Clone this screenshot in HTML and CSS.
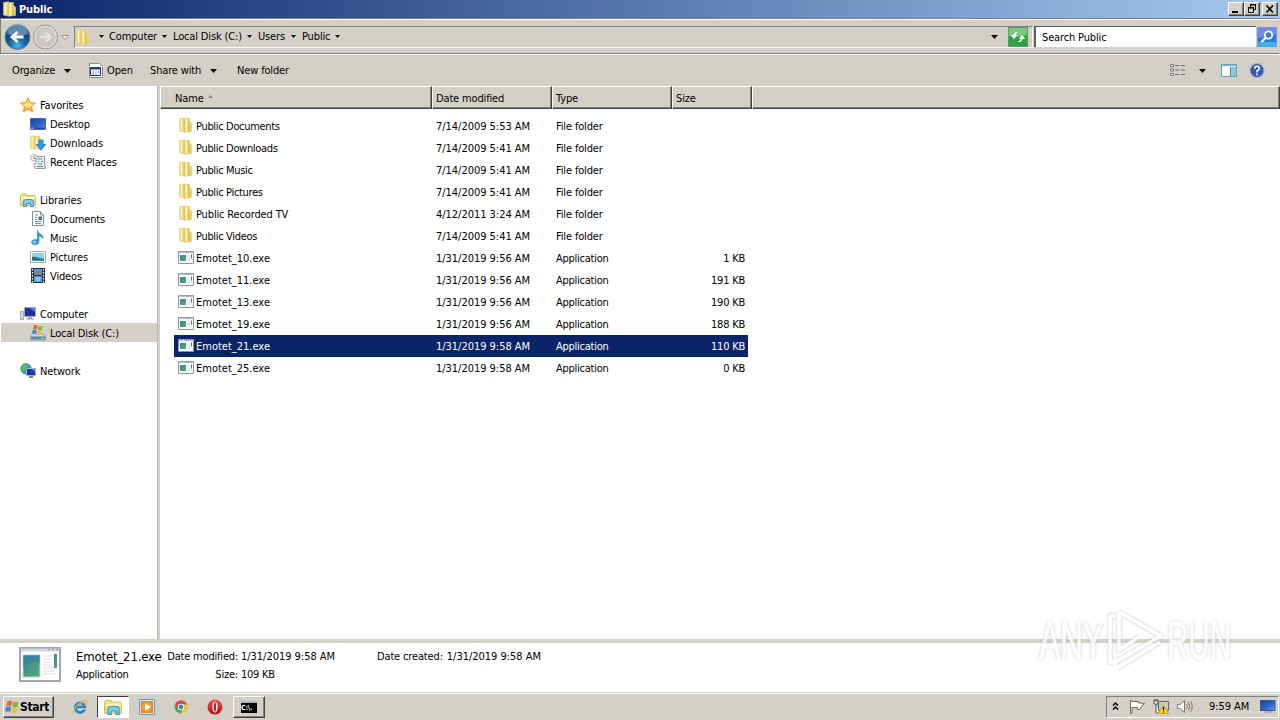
FILE: index.html
```html
<!DOCTYPE html>
<html lang="en">
<head>
<meta charset="utf-8">
<title>Public</title>
<link rel="stylesheet" href="styles.css">
</head>
<body>
<svg class="defs" width="0" height="0">
  <defs>
    <linearGradient id="gold"><stop offset="0" stop-color="#f7e895"/><stop offset=".35" stop-color="#f9eda4"/><stop offset=".6" stop-color="#e3c655"/><stop offset="1" stop-color="#f2e07e"/></linearGradient>
    <linearGradient id="screen" x2="1" y2="1"><stop offset="0" stop-color="#1a3f94"/><stop offset=".6" stop-color="#2f68c8"/><stop offset="1" stop-color="#69a4e8"/></linearGradient>
    <linearGradient id="teal" x2="1" y2="1"><stop offset="0" stop-color="#3f7f9f"/><stop offset="1" stop-color="#4fb06c"/></linearGradient>
    <radialGradient id="ball" cy=".85"><stop offset="0" stop-color="#3fc4ee"/><stop offset=".55" stop-color="#1b6bae"/><stop offset="1" stop-color="#174a80"/></radialGradient>
    <radialGradient id="grey"><stop offset="0" stop-color="#d2d0cc"/><stop offset=".75" stop-color="#c6c5c2"/><stop offset="1" stop-color="#ededed"/></radialGradient>
    <linearGradient id="red" x2="0" y2="1"><stop offset="0" stop-color="#e8584e"/><stop offset="1" stop-color="#a80f12"/></linearGradient>
    <linearGradient id="starfill" x2="0" y2="1"><stop offset="0" stop-color="#ffc44a"/><stop offset=".5" stop-color="#ffe98a"/><stop offset="1" stop-color="#f79a34"/></linearGradient>
  </defs>
  <symbol id="folder" viewBox="0 0 16 16"><path d="M1.500 1.500 6.500 .8V15L1.500 14z" fill="#f0de85" stroke="#e3cf7c" stroke-width=".6"/><path d="M6 1.500H11.500V4.500L13.500 6V14.500L6 15.300z" fill="url(#gold)" stroke="#ddc563" stroke-width=".6"/><path d="M3.500 2V13M8.500 3V9" stroke="#fff9d6"/><path d="M6.300 2V15" stroke="#d8b94a" stroke-width=".8"/><path d="M11.500 9V14.500" stroke="#d5b34a" stroke-width=".8"/></symbol>
  <symbol id="exe" viewBox="0 0 16 16"><path d="M.5 2.500H15.500V14.500H.5z" fill="#fff" stroke="#8f979f"/><path d="M1 3.500H15" stroke="#c3c9d0" stroke-width="1.500"/><path d="M8 3H14" stroke="#778" stroke-dasharray="1 1"/><path d="M2 6H8V12H2z" fill="url(#teal)"/><path d="M9 7H12M9 9H12M9 11H12" stroke="#d0d4d8"/><path d="M13 5.500H14V9.500H13z" fill="#3d8075"/></symbol>
  <symbol id="star" viewBox="0 0 16 16"><path d="M8 .8 10.200 5.600 15.300 6.200 11.500 9.700 12.600 14.800 8 12.200 3.400 14.800 4.500 9.700 .7 6.200 5.800 5.600z" fill="url(#starfill)" stroke="#ec8a2a"/></symbol>
  <symbol id="desktop" viewBox="0 0 16 16"><path d="M.5 2.500H15.500V13.500H.5z" fill="url(#screen)" stroke="#4a6ab0"/><path d="M1 11.500H15V13H1z" fill="#2a4a94"/><path d="M1 12.200H4" stroke="#75d6ff"/></symbol>
  <symbol id="down" viewBox="0 0 16 16"><use href="#folder" x="-1" width="15" height="15"/><path d="M9 5H13V9.500H15.500L11 15.200 6.500 9.500H9z" fill="#3997df" stroke="#2f78c0"/></symbol>
  <symbol id="recent" viewBox="0 0 16 16"><path d="M5 2.500H14.500V12H15.500V14.500H5.500L4 13V10H6V4" fill="#e6eef4" stroke="#879cac"/><circle cx="3.800" cy="3.800" r="3.200" fill="#f8fbfd" stroke="#9cb0be"/><path d="M4 2V4.500H6M8 5H12M8 7.500H9M11 7.500H13M8 10H12M7 12.500H13" stroke="#688397" fill="none"/></symbol>
  <symbol id="library" viewBox="0 0 16 16"><path d="M.5 3.500 2 2H6L7 3.500H14.500L15.500 6V13.500H.5z" fill="#f5df80" stroke="#d5bb60"/><path d="M1 6H15" stroke="#fff6bb" stroke-width="2"/><path d="M3.500 14.500V9L5 7.500H11.500L13.500 9V14.500H10.500V11.500H6.500V14.500z" fill="#79caed" stroke="#4296bf"/></symbol>
  <symbol id="document" viewBox="0 0 16 16"><path d="M2.500 .5H10.500L13.500 3.500V14.500H2.500z" fill="#fff" stroke="#7e91a4"/><path d="M10.500 .5V4H13.500" fill="#dae6ef" stroke="#7e91a4"/><path d="M5 4H8M5 6.500H7M5 8.500H7M5 10.500H11.500M5 12.500H11" stroke="#6c91b3"/><path d="M8.500 5.500H12V9H8.500z" fill="#4f6aa1"/></symbol>
  <symbol id="music" viewBox="0 0 16 16"><path d="M7.500 0C8 4 14 4 13 9 12 6.500 10 6 9 6V12C8.500 15.500 2 15.500 1.500 12.500 1.500 9.500 5.500 9 7.500 10z" fill="#2f92d5" stroke="#2b7dbb" stroke-width=".5"/><ellipse cx="4.500" cy="12" rx="2" ry="1.500" fill="#78c8f3"/></symbol>
  <symbol id="picture" viewBox="0 0 16 16"><path d="M.5 2.500H15.500V13.500H.5z" fill="#fff" stroke="#9baeb9"/><path d="M2 4H14V12H2z" fill="#8ed3f2"/><path d="M2 8C6 7 8 9.500 14 9.500V12H2z" fill="#287588"/><path d="M2 11H14V12H2z" fill="#35a18b"/></symbol>
  <symbol id="video" viewBox="0 0 16 16"><path d="M1 0H15V15H1z" fill="#25323e"/><path d="M4 1H12V7H4zM4 8H12V14H4z" fill="#4f9cd3"/><path d="M4 5 7 2 10 5 12 3V7H4z" fill="#8b7f8c"/><circle cx="8" cy="11" r="2.500" fill="#8bc8e9"/><path d="M2.500 1V15M13.500 1V15" stroke="#fff" stroke-width="1.200" stroke-dasharray="1.500 1.500"/></symbol>
  <symbol id="computer" viewBox="0 0 16 16"><path d="M.5 5.500H3.500V13.500H.5z" fill="#d7dce1" stroke="#9fa7ad"/><path d="M4.500 1.500H15.500V10.500H4.500z" fill="#1c2fa5" stroke="#a6abb2"/><path d="M9 2H15V6z" fill="#5873dd"/><path d="M8 11H12V12.500H14V13.500H6V12.500H8z" fill="#9da4aa"/></symbol>
  <symbol id="flag4" viewBox="0 0 16 16"><path d="M2.500 2Q5 .5 7.700 2L6.700 7Q4 6 1.300 7z" fill="#ed6532"/><path d="M8.700 2.500Q11 4 14.500 2.500L13 8Q10.500 9 7.700 7.500z" fill="#77b82c"/><path d="M1 8Q3.500 7 6.500 8L5.500 13Q3 12 0 13z" fill="#3989d5"/><path d="M7.500 8.700Q10 10 12.800 9L11.500 14Q9 15 6.500 13.700z" fill="#f6bf26"/></symbol>
  <symbol id="disk" viewBox="0 0 16 16"><path d="M2 9H13L15.500 11V15H.5V11z" fill="#cdd8de" stroke="#8596a0" stroke-width=".7"/><path d="M1 11.500H15V14.500H1z" fill="#5c8aa0"/><path d="M11 13.500H14" stroke="#70e09b"/><use href="#flag4" x="2" y="-1" width="12" height="12"/></symbol>
  <symbol id="network" viewBox="0 0 16 16"><circle cx="6" cy="5.800" r="5.300" fill="#269bd2" stroke="#4c8cae" stroke-width=".7"/><path d="M2 3 6 1 8 4 5 6 4 9 1 6z" fill="#66bd45"/><path d="M6.500 5.500H15.500V12.500H6.500z" fill="#1936b3" stroke="#a8b3c1"/><path d="M9 13H13V15H9z" fill="#6c859c"/><path d="M11 6H15V9z" fill="#5575dc"/></symbol>
  <symbol id="tri" viewBox="0 0 7 4"><path d="M0 0H7L3.500 4z" fill="#000"/></symbol>
  <symbol id="monitor" viewBox="0 0 16 16"><path d="M.5 1.500H15V11.500H.5z" fill="url(#screen)" stroke="#2b56a8"/><path d="M4 13H12" stroke="#8093b5"/></symbol>
</svg>

<div class="window">
  <header class="titlebar">
    <svg class="i16"><use href="#folder"/></svg><span class="title">Public</span>
    <div class="caption">
      <button class="cap"><svg viewBox="0 0 14 12"><path d="M3 9H9" stroke="#000" stroke-width="2"/></svg></button>
      <button class="cap"><svg viewBox="0 0 14 12"><path d="M5.500 4V1.500H10.500V6.500H9M5 2H11M3.500 4.500H8.500V9.500H3.500zM3 5H9" fill="none" stroke="#000"/></svg></button>
      <button class="cap close"><svg viewBox="0 0 14 12"><path d="M3.500 2.500 10 9.500M10 2.500 3.500 9.500" stroke="#000" stroke-width="1.700"/></svg></button>
    </div>
  </header>

  <div class="navbar">
    <svg class="travel" viewBox="0 0 70 28">
      <circle cx="17.500" cy="14" r="12.500" fill="url(#ball)" stroke="#66809b"/><path d="M7 11A10.500 10.500 0 0 1 28 11Q17 15 7 11z" fill="#9cc5df" opacity=".5"/>
      <path d="M23.500 14H13M17.500 9 12 14 17.500 19" fill="none" stroke="#fff" stroke-width="2.800"/>
      <circle cx="45.500" cy="14" r="12" fill="url(#grey)" stroke="#92918e"/><path d="M40 14H50M46 9.500 51 14 46 18.500" fill="none" stroke="#e5e4e2" stroke-width="2"/>
      <path d="M61.500 12.500H68.500L65 16.500z" fill="#f2f1ee" stroke="#999690"/>
    </svg>
    <div class="address">
      <svg class="i16"><use href="#folder"/></svg>
      <svg class="tri c0"><use href="#tri"/></svg><span class="w47">Computer</span>
      <svg class="tri"><use href="#tri"/></svg><span class="w69">Local Disk (C:)</span>
      <svg class="tri"><use href="#tri"/></svg><span class="w28">Users</span>
      <svg class="tri"><use href="#tri"/></svg><span class="w28">Public</span>
      <svg class="tri"><use href="#tri"/></svg>
      <svg class="tri drop"><use href="#tri"/></svg>
    </div>
    <svg class="refresh" viewBox="0 0 20 20"><path d="M.5 .5H19.500V19.500H.5z" fill="#2da43c" stroke="#65947a"/><path d="M1 1H19V8Q10 11 1 9z" fill="#74c97a"/><path d="M9.500 5.500Q6 5 6 9M3.500 8.500H8.500L6 11.500zM10.500 14.500Q14 15 14 11M11.500 11.500H16.500L14 8.500z" fill="#fff" stroke="#fff"/></svg>
    <div class="search">Search Public</div>
    <svg class="go" viewBox="0 0 20 20"><path d="M.5 .5H19.500V19.500H.5z" fill="#2c7bdc" stroke="#7895c9"/><path d="M1 1H19V8L1 11z" fill="#6c8ee2"/><path d="M1 15H19V19H1z" fill="#37b9ef"/><circle cx="11.500" cy="8" r="3.700" fill="#347bd5" stroke="#fff" stroke-width="1.800"/><path d="M8.500 11 4.500 15" stroke="#fff" stroke-width="2.300"/></svg>
  </div>

  <div class="commands">
    <span class="organize">Organize</span><svg class="tri"><use href="#tri"/></svg>
    <svg class="i16 openicon" viewBox="0 0 16 16"><path d="M1.500 .5H11.500L14.500 3.500V14.500H1.500z" fill="#fff" stroke="#8b8f98"/><path d="M2.500 4.500H12.500V12.500H2.500z" fill="#fff" stroke="#172b63"/><path d="M3 5.500H12" stroke="#2c49a0" stroke-width="2"/><path d="M4.500 9H6M7.500 9H8.500M10 9H11.500M4.500 11H6M7.500 11H8.500" stroke="#315496"/></svg>
    <span class="open">Open</span><span class="share">Share with</span><svg class="tri"><use href="#tri"/></svg><span class="newfolder">New folder</span>
    <div class="viewtools">
      <svg class="views" viewBox="0 0 16 14"><path d="M.5 .5H3.500V2.500H.5zM.5 5H3.500V7H.5zM.5 9.500H3.500V11.500H.5z" fill="#fff" stroke="#777"/><path d="M5 1.500H9M10.500 1.500H15M5 6H9M10.500 6H15M5 10.500H9M10.500 10.500H15" stroke="#696f7b"/></svg>
      <svg class="tri"><use href="#tri"/></svg>
      <svg class="i16 pane" viewBox="0 0 16 16"><path d="M.5 1.500H15.500V13.500H.5z" fill="#fff" stroke="#5e9eb7"/><path d="M1 2.500H15" stroke="#87b8cc" stroke-width="1.500"/><path d="M10 4H15V13H10z" fill="#8fc6dc"/><path d="M9.500 4V13" stroke="#518ba4"/></svg>
      <svg class="i16 help" viewBox="0 0 16 16"><circle cx="8" cy="7.500" r="7" fill="#3159b5" stroke="#a0abc6" stroke-width="1.200"/><path d="M5.700 5.700Q5.700 3.300 8 3.300T10.300 5.500Q10.300 6.700 8 8V9.500M8 10.500V12.200" stroke="#fff" stroke-width="1.600" fill="none"/></svg>
    </div>
  </div>

  <main class="content">
    <nav class="tree">
      <div class="node root"><svg class="i16"><use href="#star"/></svg><span>Favorites</span></div>
      <div class="node"><svg class="i16"><use href="#desktop"/></svg><span>Desktop</span></div>
      <div class="node"><svg class="i16"><use href="#down"/></svg><span>Downloads</span></div>
      <div class="node"><svg class="i16"><use href="#recent"/></svg><span>Recent Places</span></div>
      <div class="node root gap"><svg class="i16"><use href="#library"/></svg><span>Libraries</span></div>
      <div class="node"><svg class="i16"><use href="#document"/></svg><span>Documents</span></div>
      <div class="node"><svg class="i16"><use href="#music"/></svg><span>Music</span></div>
      <div class="node"><svg class="i16"><use href="#picture"/></svg><span>Pictures</span></div>
      <div class="node"><svg class="i16"><use href="#video"/></svg><span>Videos</span></div>
      <div class="node root gap"><svg class="i16"><use href="#computer"/></svg><span>Computer</span></div>
      <div class="node current"><svg class="i16"><use href="#disk"/></svg><span>Local Disk (C:)</span></div>
      <div class="node root gap"><svg class="i16"><use href="#network"/></svg><span>Network</span></div>
    </nav>
    <section class="files">
      <div class="head"><div class="hname">Name<svg class="sort" viewBox="0 0 5 3"><path d="M0 3H5L2.500 0z" fill="#8b8882"/></svg></div><div>Date modified</div><div>Type</div><div>Size</div><div></div></div>
      <div class="rows">
        <div class="row"><svg class="i16"><use href="#folder"/></svg><span class="fname">Public Documents</span><span class="date">7/14/2009 5:53 AM</span><span>File folder</span><span></span></div>
        <div class="row"><svg class="i16"><use href="#folder"/></svg><span class="fname">Public Downloads</span><span class="date">7/14/2009 5:41 AM</span><span>File folder</span><span></span></div>
        <div class="row"><svg class="i16"><use href="#folder"/></svg><span class="fname">Public Music</span><span class="date">7/14/2009 5:41 AM</span><span>File folder</span><span></span></div>
        <div class="row"><svg class="i16"><use href="#folder"/></svg><span class="fname">Public Pictures</span><span class="date">7/14/2009 5:41 AM</span><span>File folder</span><span></span></div>
        <div class="row"><svg class="i16"><use href="#folder"/></svg><span>Public Recorded TV</span><span class="date">4/12/2011 3:24 AM</span><span>File folder</span><span></span></div>
        <div class="row"><svg class="i16"><use href="#folder"/></svg><span class="fname">Public Videos</span><span class="date">7/14/2009 5:41 AM</span><span>File folder</span><span></span></div>
        <div class="row"><svg class="i16"><use href="#exe"/></svg><span class="ename">Emotet_10.exe</span><span class="date">1/31/2019 9:56 AM</span><span class="kind">Application</span><span>1 KB</span></div>
        <div class="row"><svg class="i16"><use href="#exe"/></svg><span class="ename">Emotet_11.exe</span><span class="date">1/31/2019 9:56 AM</span><span class="kind">Application</span><span>191 KB</span></div>
        <div class="row"><svg class="i16"><use href="#exe"/></svg><span class="ename">Emotet_13.exe</span><span class="date">1/31/2019 9:56 AM</span><span class="kind">Application</span><span>190 KB</span></div>
        <div class="row"><svg class="i16"><use href="#exe"/></svg><span class="ename">Emotet_19.exe</span><span class="date">1/31/2019 9:56 AM</span><span class="kind">Application</span><span>188 KB</span></div>
        <div class="row selected"><svg class="i16"><use href="#exe"/></svg><span class="ename">Emotet_21.exe</span><span class="date">1/31/2019 9:58 AM</span><span class="kind">Application</span><span>110 KB</span></div>
        <div class="row"><svg class="i16"><use href="#exe"/></svg><span class="ename">Emotet_25.exe</span><span class="date">1/31/2019 9:58 AM</span><span class="kind">Application</span><span>0 KB</span></div>
      </div>
    </section>
  </main>

  <footer class="details">
    <svg class="bigicon" viewBox="0 0 42 36"><path d="M1 1H41V34H1z" fill="#fff" stroke="#a3a7ad" stroke-width="2"/><path d="M2 3H40" stroke="#d3d7dc" stroke-width="3"/><path d="M29 2.500H39" stroke="#999" stroke-width="1.500" stroke-dasharray="2 2"/><path d="M4 8H21V30H4z" fill="url(#teal)" stroke="#c6d6da"/><path d="M4 22Q10 11 21 16V8H4z" fill="#347aaa" opacity=".5"/><path d="M24 9H32M24 12H32M24 15H32M24 18H32M24 21H36M24 24H36M24 27H36" stroke="#dcdfe1"/><path d="M35 7H38V21H35z" fill="url(#teal)"/></svg>
    <div class="filetype"><span class="filename">Emotet_21.exe</span><span class="kind">Application</span></div>
    <div class="labels"><span>Date modified:</span><span>Size:</span></div>
    <div class="values"><span class="date">1/31/2019 9:58 AM</span><span>109 KB</span></div>
    <div class="created"><span>Date created:</span><span class="date">1/31/2019 9:58 AM</span></div>
  </footer>

  <div class="taskbar">
    <button class="start"><svg><use href="#flag4"/></svg><span>Start</span></button>
    <div class="task ie"><svg class="i16" viewBox="0 0 16 16"><path d="M12.500 10.500A4.800 4.800 0 1 1 12.800 8H4" fill="none" stroke="#2083cf" stroke-width="2.700"/><path d="M1.500 14.500C-1 11 11 0 14.500 1.500 15.500 2 14 5 13 6" fill="none" stroke="#e6b83f" stroke-width="1.200"/></svg></div>
    <div class="task active"><svg class="i18"><use href="#library"/></svg></div>
    <div class="task wmp"><svg class="i16" viewBox="0 0 16 16"><path d="M.5 .5H15.500V15.500H.5z" fill="#cfe5f4" stroke="#5e9cd0"/><path d="M2 2H14V14H2z" fill="#f08b16"/><circle cx="8" cy="8" r="4.700" fill="#f8a637"/><path d="M6 4.500 12 8 6 11.500z" fill="#fff"/></svg></div>
    <div class="task chrome"><svg class="i14" viewBox="0 0 14 14"><circle cx="7" cy="7" r="6.500" fill="#49a951"/><path d="M1.200 4A6.500 6.500 0 0 1 13 4.500H7L4.500 9z" fill="#dc493a"/><path d="M13 4.500A6.500 6.500 0 0 1 6.500 13.500L9.500 8 8 4.500z" fill="#f4c72e"/><circle cx="7" cy="7" r="3.200" fill="#fff"/><circle cx="7" cy="7" r="2.400" fill="#397fd5"/></svg></div>
    <div class="task opera"><svg class="i16" viewBox="0 0 16 16"><circle cx="8" cy="8" r="7.500" fill="url(#red)"/><ellipse cx="8" cy="8" rx="2.600" ry="5.500" fill="#fff"/><ellipse cx="8" cy="8" rx="1.200" ry="4.800" fill="#b82525"/></svg></div>
    <div class="task console"><div class="cmd">C:\.</div></div>
    <div class="tray">
      <svg class="chev" viewBox="0 0 7 9"><path d="M1 3.500 3.500 1 6 3.500M1 7.500 3.500 5 6 7.500" stroke="#000" stroke-width="1.500" fill="none"/></svg>
      <svg class="i16 flag" viewBox="0 0 16 16"><path d="M1.500 1.500V14.500H3V8.500H8.500V10.500H11Q12 7 15.500 4.500Q12 4 9.500 4V2.500H3V1.500z" fill="#fff" stroke="#6f6d68"/></svg>
      <svg class="i16 lan" viewBox="0 0 16 16"><path d="M5.500 2.500H15.500V11.500H5.500z" fill="#c8c8c5" stroke="#666"/><path d="M1 1H5V5H1zM3 5V14H6M2 0V3M4 0V3" stroke="#555" fill="#fff"/><path d="M10.500 6 15.500 14.500H5.500z" fill="#ffd820" stroke="#d0ac18"/><path d="M10.500 8V11.500M10.500 12.500V13.500" stroke="#000" stroke-width="1.300"/></svg>
      <svg class="i16 sound" viewBox="0 0 16 16"><path d="M.5 5.500H3L7.500 1.500V13.500L3 9.500H.5z" fill="#fff" stroke="#777"/><path d="M9.500 5Q11.500 7.500 9.500 10M11.500 3.500Q14 7.500 11.500 11.500M13.500 2Q17 7.500 13.500 13" fill="none" stroke="#777"/></svg>
      <span class="clock">9:59 AM</span>
      <svg class="i16 show"><use href="#monitor"/></svg>
    </div>
  </div>

  <div class="watermark">
    <span class="any">ANY</span>
    <svg viewBox="0 0 60 68"><g fill="none" stroke-linejoin="round"><path d="M10 9H5V55H9M14 5V43L34 30 M14 5 56 29 12 54M12 61 55 35" stroke="#bbb" stroke-width="7" opacity=".35"/><path d="M10 9H5V55H9M14 5V43L34 30M14 5 56 29 12 54M12 61 55 35" stroke="#fff" stroke-width="3.500"/></g></svg>
    <span class="run">RUN</span>
  </div>
</div>
</body>
</html>
```
FILE: styles.css
```css
* { box-sizing: border-box; }
body { margin: 0; background: #d4d0c8; color: #000; font: 11px/14px "DejaVu Sans Condensed", "DejaVu Sans", sans-serif; font-stretch: condensed; letter-spacing: -0.15px; overflow: hidden; }
svg { display: block; flex: none; }
.defs { position: absolute; }
span { white-space: nowrap; }
.i16 { width: 16px; height: 16px; }
.i18 { width: 18px; height: 18px; }
.i14 { width: 14px; height: 14px; }
.window { position: relative; width: 1280px; height: 720px; display: flex; flex-direction: column; }

.titlebar { height: 18px; display: flex; align-items: center; padding-left: 2px; background: linear-gradient(90deg, #0a246a, #a6caf0); }
.title { color: #fff; font-weight: bold; margin: 1px 0 0 1px; }
.caption { margin-left: auto; display: flex; padding-right: 2px; }
.cap { width: 16px; height: 14px; padding: 0; background: #d4d0c8; border: 1px solid; border-color: #fff #404040 #404040 #fff; box-shadow: inset -1px -1px #808080; }
.cap svg { width: 14px; height: 12px; }
.close { margin-left: 2px; }

.navbar { height: 36px; display: flex; align-items: center; border-top: 1px solid #808080; border-bottom: 1px solid #808080; border-left: 1px solid #808080; box-shadow: inset 0 1px #fff, 0 1px #fff; margin-right: 1px; padding-top: 1px; }
.travel { width: 70px; height: 28px; margin-left: -1px; }
.address { width: 959px; height: 22px; margin-left: 4px; display: flex; align-items: center; border: 1px solid; border-color: #808080 #fff #fff #808080; }
.tri { width: 7px; height: 4px; }
.address .tri { width: 5px; height: 3px; margin-right: 6px; }
.address .c0 { margin-left: 8px; margin-right: 5px; }
.address .drop { width: 7px; height: 4px; margin: 0 34px 0 auto; }
.w47 { width: 53px; }
.w69 { width: 74px; }
.w28 { width: 33px; }
.refresh { width: 20px; height: 20px; margin-left: -25px; }
.search { width: 222px; height: 21px; margin-left: 6px; padding: 4px 6px 0; background: #fff; border: solid; border-width: 1px 0 0 2px; border-color: #606060; }
.go { width: 20px; height: 20px; margin-left: 1px; }

.commands { height: 32px; display: flex; align-items: center; padding-left: 12px; border-top: 1px solid #fff; }
.organize { width: 52px; }
.openicon { margin-left: 17px; margin-right: 3px; }
.open { width: 43px; }
.share { width: 60px; }
.newfolder { margin-left: 20px; }
.viewtools { margin-left: auto; display: flex; align-items: center; padding-right: 15px; }
.views { width: 16px; height: 14px; margin-right: 13px; }
.pane { margin-left: 15px; }
.help { margin-left: 12px; }

.content { height: 553px; display: flex; }
.tree { width: 158px; padding-top: 9px; background: #fff; border-right: 1px solid #bcb8b0; }
.node { height: 19px; padding-left: 30px; display: flex; align-items: center; gap: 4px; }
.node span { padding-top: 2px; }
.root { padding-left: 20px; }
.gap { margin-top: 19px; }
.current { background: #d4d0c8; margin-left: 1px; padding-left: 29px; }
.files { width: 1120px; margin-left: 2px; background: #fff; }
.head { height: 23px; display: grid; grid-template-columns: 272px 120px 120px 80px 528px; background: #d4d0c8; }
.head div { display: flex; align-items: center; padding: 2px 0 0 3px; border: 1px solid; border-color: #fff #404040 #404040 #fff; box-shadow: inset -1px -1px #808080; }
.head .hname { padding-left: 14px; }
.sort { width: 5px; height: 3px; margin: -5px 0 0 4px; }
.rows { padding: 6px 0 0 14px; }
.row { width: 574px; height: 22px; padding-left: 4px; display: grid; grid-template-columns: 18px 240px 120px 120px 69px; align-items: center; }
.row .i16 { margin-top: -3px; }
.row span { padding-top: 2px; }
.row span:last-child { text-align: right; letter-spacing: -.22px; }
.fname { letter-spacing: -.33px; }
.ename { letter-spacing: 0; }
.date { letter-spacing: -.03px; }
.kind { letter-spacing: -.25px; }
.selected { background: #0a246a; color: #fff; }

.details { height: 53px; display: flex; padding-left: 19px; background: #fff; border-top: 4px solid #d4d0c8; }
.bigicon { width: 42px; height: 36px; margin-top: 4px; }
.details div { display: flex; flex-direction: column; gap: 4px; padding-top: 7px; }
.filetype { width: 91px; margin-left: 15px; }
.filename { font-size: 13px; }
.labels { width: 71px; align-items: flex-end; letter-spacing: -.2px; }
.values { margin-left: 3px; width: 136px; }
.values span:last-child { letter-spacing: -.25px; }
.details .created { flex-direction: row; }

.taskbar { height: 28px; display: flex; align-items: center; padding: 1px 1px 0 3px; border-top: 1px solid #d4d0c8; box-shadow: inset 0 1px #fff; }
.start { width: 51px; height: 22px; padding: 0 2px 0 0; display: flex; align-items: center; background: #d4d0c8; border: 1px solid; border-color: #fff #404040 #404040 #fff; box-shadow: inset -1px -1px #808080; font: bold 12px "DejaVu Sans Condensed", sans-serif; letter-spacing: -.3px; }
.start svg { width: 15px; height: 16px; margin: 0 0 0 1px; }
.task { height: 22px; display: flex; align-items: center; justify-content: center; }
.ie { width: 43px; padding-left: 8px; }
.active { width: 32px; background: #fff; border: 1px solid; border-color: #404040 #fff #fff #404040; }
.wmp { width: 36px; }
.chrome { width: 32px; }
.opera { width: 35px; margin-right: 1px; }
.console { width: 32px; border: 1px solid; border-color: #fff #404040 #404040 #fff; box-shadow: inset -1px -1px #808080; }
.cmd { width: 16px; height: 12px; background: #000; border-top: 2px solid #a9b5c7; color: #fff; font: bold 7px/10px "DejaVu Sans Condensed", sans-serif; }
.tray { width: 173px; height: 22px; margin-left: auto; padding: 0 2px 0 5px; display: flex; align-items: center; border: 1px solid; border-color: #808080 #fff #fff #808080; }
.chev { width: 7px; height: 9px; margin-top: -2px; }
.flag { margin-left: 10px; }
.lan, .sound { margin-left: 8px; }
.clock { width: 42px; margin-left: 16px; letter-spacing: -.05px; }
.show { margin-left: 9px; }

.watermark { position: absolute; left: 1039px; top: 607px; display: flex; align-items: center; color: #fff; font: 53px/68px "Liberation Sans", sans-serif; -webkit-text-stroke: 1px #fff; text-shadow: 0 0 4px #aaa; opacity: .8; }
.watermark svg { width: 60px; height: 68px; margin-left: 3px; }
.any, .run { width: 63px; transform: scaleX(.6); transform-origin: left; }
.any { letter-spacing: -.5px; }
.run { margin-left: 2px; transform: scaleX(.56); }
```
